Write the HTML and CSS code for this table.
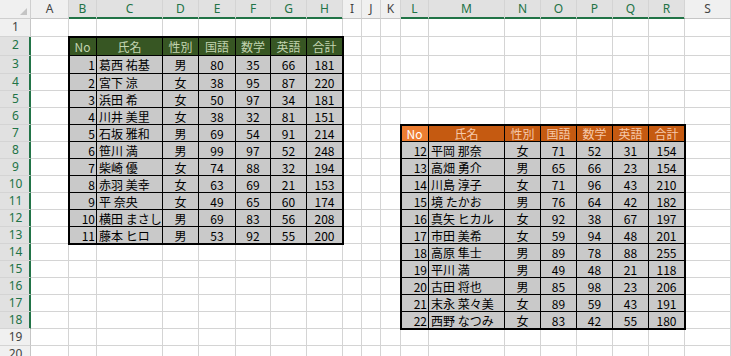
FILE: index.html
```html
<!DOCTYPE html>
<html lang="ja">
<head>
<meta charset="utf-8">
<title>Sheet</title>
<link rel="stylesheet" href="styles.css">
</head>
<body>
<div class="sheet">
  <div class="corner"><span class="tri"></span></div>

  <div class="colheads">
    <div>A</div><div class="sel">B</div><div class="sel">C</div><div class="sel">D</div><div class="sel">E</div><div class="sel">F</div><div class="sel">G</div><div class="sel">H</div><div>I</div><div>J</div><div>K</div><div class="sel">L</div><div class="sel">M</div><div class="sel">N</div><div class="sel">O</div><div class="sel">P</div><div class="sel">Q</div><div class="sel">R</div><div>S</div>
  </div>

  <div class="rowheads">
    <div>1</div><div class="sel">2</div><div class="sel">3</div><div class="sel">4</div><div class="sel">5</div><div class="sel">6</div><div class="sel">7</div><div class="sel">8</div><div class="sel">9</div><div class="sel">10</div><div class="sel">11</div><div class="sel">12</div><div class="sel">13</div><div class="sel">14</div><div class="sel">15</div><div class="sel">16</div><div class="sel">17</div><div class="sel">18</div><div>19</div><div>20</div>
  </div>

  <div class="vlines">
    <div></div><div></div><div></div><div></div><div></div><div></div><div></div><div></div><div></div><div></div><div></div><div></div><div></div><div></div><div></div><div></div><div></div><div></div><div></div>
  </div>
  <div class="hlines">
    <div></div><div></div><div></div><div></div><div></div><div></div><div></div><div></div><div></div><div></div><div></div><div></div><div></div><div></div><div></div><div></div><div></div><div></div><div></div><div></div>
  </div>

  <div class="dt dt-left">
    <div class="tr hd"><div>No</div><div>氏名</div><div>性別</div><div>国語</div><div>数学</div><div>英語</div><div>合計</div></div>
    <div class="tr"><div class="no">1</div><div class="nm">葛西 祐基</div><div>男</div><div>80</div><div>35</div><div>66</div><div>181</div></div>
    <div class="tr"><div class="no">2</div><div class="nm">宮下 涼</div><div>女</div><div>38</div><div>95</div><div>87</div><div>220</div></div>
    <div class="tr"><div class="no">3</div><div class="nm">浜田 希</div><div>女</div><div>50</div><div>97</div><div>34</div><div>181</div></div>
    <div class="tr"><div class="no">4</div><div class="nm">川井 美里</div><div>女</div><div>38</div><div>32</div><div>81</div><div>151</div></div>
    <div class="tr"><div class="no">5</div><div class="nm">石坂 雅和</div><div>男</div><div>69</div><div>54</div><div>91</div><div>214</div></div>
    <div class="tr"><div class="no">6</div><div class="nm">笹川 満</div><div>男</div><div>99</div><div>97</div><div>52</div><div>248</div></div>
    <div class="tr"><div class="no">7</div><div class="nm">柴崎 優</div><div>女</div><div>74</div><div>88</div><div>32</div><div>194</div></div>
    <div class="tr"><div class="no">8</div><div class="nm">赤羽 美幸</div><div>女</div><div>63</div><div>69</div><div>21</div><div>153</div></div>
    <div class="tr"><div class="no">9</div><div class="nm">平 奈央</div><div>女</div><div>49</div><div>65</div><div>60</div><div>174</div></div>
    <div class="tr"><div class="no">10</div><div class="nm">横田 まさし</div><div>男</div><div>69</div><div>83</div><div>56</div><div>208</div></div>
    <div class="tr"><div class="no">11</div><div class="nm">藤本 ヒロ</div><div>男</div><div>53</div><div>92</div><div>55</div><div>200</div></div>
  </div>

  <div class="dt dt-right">
    <div class="tr hd"><div class="active">No</div><div>氏名</div><div>性別</div><div>国語</div><div>数学</div><div>英語</div><div>合計</div></div>
    <div class="tr"><div class="no">12</div><div class="nm">平岡 那奈</div><div>女</div><div>71</div><div>52</div><div>31</div><div>154</div></div>
    <div class="tr"><div class="no">13</div><div class="nm">高畑 勇介</div><div>男</div><div>65</div><div>66</div><div>23</div><div>154</div></div>
    <div class="tr"><div class="no">14</div><div class="nm">川島 淳子</div><div>女</div><div>71</div><div>96</div><div>43</div><div>210</div></div>
    <div class="tr"><div class="no">15</div><div class="nm">境 たかお</div><div>男</div><div>76</div><div>64</div><div>42</div><div>182</div></div>
    <div class="tr"><div class="no">16</div><div class="nm">真矢 ヒカル</div><div>女</div><div>92</div><div>38</div><div>67</div><div>197</div></div>
    <div class="tr"><div class="no">17</div><div class="nm">市田 美希</div><div>女</div><div>59</div><div>94</div><div>48</div><div>201</div></div>
    <div class="tr"><div class="no">18</div><div class="nm">高原 隼士</div><div>男</div><div>89</div><div>78</div><div>88</div><div>255</div></div>
    <div class="tr"><div class="no">19</div><div class="nm">平川 満</div><div>男</div><div>49</div><div>48</div><div>21</div><div>118</div></div>
    <div class="tr"><div class="no">20</div><div class="nm">古田 将也</div><div>男</div><div>85</div><div>98</div><div>23</div><div>206</div></div>
    <div class="tr"><div class="no">21</div><div class="nm">末永 菜々美</div><div>女</div><div>89</div><div>59</div><div>43</div><div>191</div></div>
    <div class="tr"><div class="no">22</div><div class="nm">西野 なつみ</div><div>女</div><div>83</div><div>42</div><div>55</div><div>180</div></div>
  </div>
</div>
</body>
</html>
```
FILE: styles.css
```css
html, body {
  margin: 0;
  padding: 0;
  background: #ffffff;
  overflow: hidden;
}

.sheet {
  --cols: 38px 28px 66px 36px 37px 35px 36px 36px 19px 19px 20px 28px 76px 36px 36px 36px 36px 36px 46px;
  --rows: 18px 19px 18px repeat(16, 17px) 11px;
  display: grid;
  grid-template-columns: 31px var(--cols);
  grid-template-rows: 19px var(--rows);
  width: 731px;
  height: 356px;
  overflow: hidden;
  font-family: "Noto Sans", "Liberation Sans", sans-serif;
}

/* corner */
.corner {
  grid-area: 1 / 1 / 2 / 2;
  box-sizing: border-box;
  background: #f0f0f0;
  border-right: 1px solid #cfcfcf;
  border-bottom: 1px solid #cfcfcf;
  display: flex;
  justify-content: flex-end;
  align-items: flex-end;
  padding: 0 3px 3px 0;
}
.tri {
  width: 0;
  height: 0;
  border-left: 7px solid transparent;
  border-bottom: 7px solid #c4c4c4;
}

/* column headers */
.colheads {
  grid-area: 1 / 2 / 2 / -1;
  display: grid;
  grid-template-columns: var(--cols);
}
.colheads > div {
  box-sizing: border-box;
  background: #f0f0f0;
  border-right: 1px solid #d4d4d4;
  border-bottom: 1px solid #c6c6c6;
  color: #444444;
  font-size: 12px;
  line-height: 18px;
  text-align: center;
}
.colheads > .sel {
  background: #e1e1e1;
  color: #217346;
  border-bottom-color: #217346;
  box-shadow: inset 0 -1px 0 #217346;
}

/* row headers */
.rowheads {
  grid-area: 2 / 1 / -1 / 2;
  display: grid;
  grid-template-rows: var(--rows);
}
.rowheads > div {
  box-sizing: border-box;
  background: #f0f0f0;
  border-right: 1px solid #c6c6c6;
  border-bottom: 1px solid #d4d4d4;
  color: #444444;
  font-size: 12px;
  line-height: 16px;
  text-align: center;
  padding-left: 1px;
  overflow: hidden;
}
.rowheads > .sel {
  background: #e1e1e1;
  color: #217346;
  border-right-color: #217346;
  box-shadow: inset -1px 0 0 #217346;
}

/* grid lines */
.vlines {
  grid-area: 2 / 2 / -1 / -1;
  display: grid;
  grid-template-columns: var(--cols);
}
.vlines > div {
  border-right: 1px solid #d4d4d4;
}
.hlines {
  grid-area: 2 / 2 / -1 / -1;
  display: grid;
  grid-template-rows: var(--rows);
}
.hlines > div {
  border-bottom: 1px solid #d4d4d4;
}

/* data tables */
.dt {
  display: grid;
  box-shadow: 0 0 0 1px #000000;
  font-family: "Noto Sans CJK JP", "Noto Sans", sans-serif;
  font-size: 12px;
  color: #000000;
  z-index: 1;
}
.dt-left {
  grid-area: 3 / 3 / 15 / 10;
  grid-template-columns: 28px 66px 36px 37px 35px 36px 36px;
  grid-template-rows: 19px 18px repeat(10, 17px);
}
.dt-right {
  grid-area: 8 / 13 / 20 / 20;
  grid-template-columns: 28px 76px 36px 36px 36px 36px 36px;
  grid-template-rows: repeat(12, 17px);
}
.tr {
  display: contents;
}
.tr > div {
  box-sizing: border-box;
  background: #c9c9c9;
  border-right: 1px solid #000000;
  border-bottom: 1px solid #000000;
  display: flex;
  align-items: center;
  justify-content: center;
  white-space: nowrap;
  overflow: hidden;
}
.tr > div:first-child {
  box-shadow: inset 1px 0 0 #000000;
}
.tr > .no {
  justify-content: flex-end;
  padding-right: 1px;
}
.tr > .nm {
  justify-content: flex-start;
  padding-left: 2px;
}
.dt .hd > div {
  box-shadow: inset 0 1px 0 #000000;
}
.dt .hd > div:first-child {
  box-shadow: inset 1px 1px 0 #000000;
}
.dt-left .hd > div {
  background: #375623;
  color: #c2d4b0;
}
.dt-right .hd > div {
  background: #c55a11;
  color: #f6c9aa;
}
.dt-right .hd > .active {
  background: #ed7d31;
  color: #ffffff;
  box-shadow: inset 0 0 0 1px #217346;
}
```
